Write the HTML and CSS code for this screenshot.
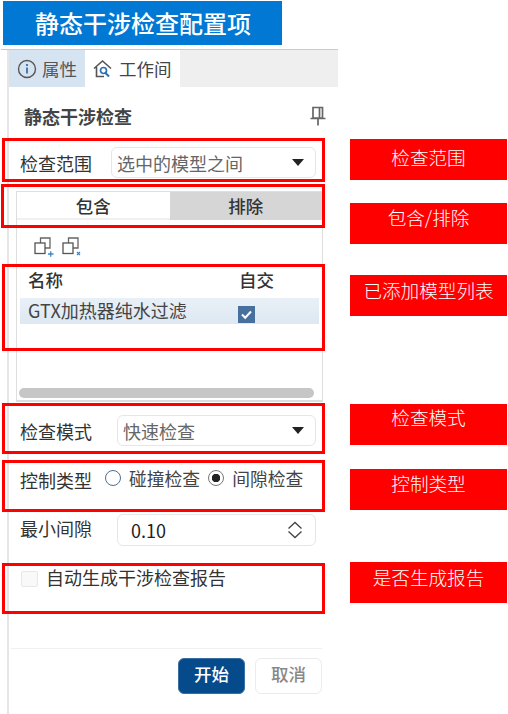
FILE: index.html
```html
<!DOCTYPE html>
<html lang="zh">
<head>
<meta charset="utf-8">
<title>静态干涉检查配置项</title>
<link rel="stylesheet" href="styles.css">
</head>
<body>
<div class="page">
  <h1 class="banner">静态干涉检查配置项</h1>
  <section class="panel">
    <div class="panel-body">
      <div class="tabs">
        <div class="tab tab-active">
          <svg class="tab-icon" viewBox="0 0 20 20" width="20" height="20"><circle cx="10" cy="10" r="8.500" fill="none" stroke="#555" stroke-width="1.400"/><path d="M10 8.500v6" stroke="#2a5f9a" stroke-width="1.600"/><circle cx="10" cy="6" r="1.100" fill="#2a5f9a"/></svg>
          <span>属性</span>
        </div>
        <div class="tab tab-plain">
          <svg class="tab-icon" viewBox="0 0 20 20" width="20" height="20"><path d="M1 9.500 9.500 2 18 9.500M3.500 8v9.500H11" fill="none" stroke="#555" stroke-width="1.600"/><circle cx="10.500" cy="11.500" r="3" fill="none" stroke="#2a6fb0" stroke-width="1.700"/><path d="m12.500 14 3.500 3.500" stroke="#2a6fb0" stroke-width="2"/></svg>
          <span>工作间</span>
        </div>
        <div class="tab-rest"></div>
      </div>

      <div class="title-row">
        <h2 class="title">静态干涉检查</h2>
        <svg class="pin" viewBox="0 0 18 20" width="18" height="20"><path d="M4 1.500h9.500V12H4zM10.500 1.500V12M1.500 12.500h15M9 12.500V19.500" fill="none" stroke="#666" stroke-width="1.700"/></svg>
      </div>

      <div class="row row-scope">
        <span class="label label-scope">检查范围</span>
        <div class="select select-scope"><span>选中的模型之间</span><i class="caret"></i></div>
      </div>

      <div class="group">
        <div class="seg">
          <div class="seg-item seg-on">包含</div>
          <div class="seg-item seg-off">排除</div>
        </div>
        <div class="tools">
          <svg viewBox="0 0 20 20" width="20" height="20"><path d="M6.500 6V1h9.500v10H11" fill="none" stroke="#666" stroke-width="1.300"/><rect x="1" y="6" width="10" height="10.500" fill="none" stroke="#555" stroke-width="1.300"/><path d="M14 17h5.500M16.700 14.300v5.500" stroke="#3f87c5" stroke-width="1.300"/></svg>
          <svg viewBox="0 0 20 20" width="20" height="20"><path d="M6.500 6V1h9.500v10H11" fill="none" stroke="#666" stroke-width="1.300"/><rect x="1" y="6" width="10" height="10.500" fill="none" stroke="#555" stroke-width="1.300"/><path d="m15 15 3 3m0-3-3 3" stroke="#3f87c5" stroke-width="1.200"/></svg>
        </div>
        <div class="thead">
          <span class="col-name">名称</span>
          <span class="col-self">自交</span>
        </div>
        <div class="trow">
          <span class="col-name">GTX加热器纯水过滤</span>
          <span class="tick"><svg viewBox="0 0 17 17" width="17" height="17"><path d="m4 8.500 3.200 3.200L13 5.500" fill="none" stroke="#fff" stroke-width="2"/></svg></span>
        </div>
        <div class="scrollbar"></div>
      </div>

      <div class="row row-mode">
        <span class="label label-mode">检查模式</span>
        <div class="select select-mode"><span>快速检查</span><i class="caret"></i></div>
      </div>

      <div class="row row-type">
        <span class="label label-type">控制类型</span>
        <span class="radio"></span><span class="radio-text">碰撞检查</span>
        <span class="radio radio-on"></span><span class="radio-text">间隙检查</span>
      </div>

      <div class="row row-gap">
        <span class="label label-mode label-up">最小间隙</span>
        <div class="select select-mode number"><span>0.10</span>
          <svg viewBox="0 0 16 18" width="16" height="18"><path d="m1.500 7.500 6.500-6 6.500 6M1.500 10.500l6.500 6 6.500-6" fill="none" stroke="#444" stroke-width="1.300"/></svg>
        </div>
      </div>

      <div class="row row-report">
        <span class="box"></span><span class="label label-up">自动生成干涉检查报告</span>
      </div>

      <div class="footer">
        <button class="btn btn-primary">开始</button>
        <button class="btn btn-ghost">取消</button>
      </div>
    </div>
  </section>

  <div class="mark mark-1"></div>
  <div class="mark mark-2"></div>
  <div class="mark mark-3"></div>
  <div class="mark mark-4"></div>
  <div class="mark mark-5"></div>
  <div class="mark mark-6"></div>

  <div class="note note-1">检查范围</div>
  <div class="note note-2">包含/排除</div>
  <div class="note note-3">已添加模型列表</div>
  <div class="note note-4">检查模式</div>
  <div class="note note-5">控制类型</div>
  <div class="note note-6">是否生成报告</div>
</div>
</body>
</html>
```

FILE: styles.css
```css
* { box-sizing: border-box; }
html, body { margin: 0; padding: 0; background: #fff; }
.page {
  position: relative;
  width: 508px;
  height: 714px;
  overflow: hidden;
  padding-top: 1px;
  font-family: "Noto Sans CJK SC", "Noto Sans", sans-serif;
  color: #333;
}
.banner {
  width: 279px;
  height: 44px;
  margin: 0 0 0 3px;
  background: #0078d4;
  color: #fff;
  font-size: 24px;
  font-weight: 500;
  line-height: 44px;
  padding-left: 32px;
}
.panel {
  width: 337px;
  margin: 4px 0 0 1px;
  border-top: 1px solid #c3ccd1;
}
.panel-body {
  margin-left: 6px;
  border-left: 2px solid #e6e6e6;
  height: 664px;
}
.tabs { display: flex; height: 37px; }
.tab {
  display: flex;
  align-items: center;
  font-size: 17.500px;
  color: #555;
}
.tab-active { width: 76px; background: #d6e4f2; padding-left: 8px; gap: 5px; }
.tab-plain { width: 95px; padding-left: 8px; gap: 6px; color: #444; }
.tab-rest { flex: 1; background: #efefef; }
.tab-icon { flex: none; }
.title-row {
  display: flex;
  align-items: center;
  justify-content: space-between;
  height: 34px;
  margin-top: 12px;
  padding: 0 11px 0 15px;
}
.title { margin: 0; font-size: 18px; line-height: 34px; font-weight: 700; color: #444; }
.row { display: flex; align-items: center; padding-left: 11px; }
.label { font-size: 18px; color: #333; line-height: 24px; white-space: nowrap; }
.label-up { padding-bottom: 4px; }
.label-scope { width: 91px; }
.label-mode { width: 97px; }
.label-type { width: 85px; }
.row-scope { height: 31px; margin-top: 14px; }
.select {
  display: flex;
  align-items: center;
  justify-content: space-between;
  height: 100%;
  border: 1px solid #e6e6e6;
  border-radius: 6px;
  font-size: 18px;
  color: #666;
  padding: 0 11px 0 5px;
}
.select-scope { width: 205px; }
.select-mode { width: 199px; }
.caret {
  width: 0;
  height: 0;
  border-left: 6px solid transparent;
  border-right: 6px solid transparent;
  border-top: 7px solid #222;
}
.group {
  width: 307px;
  height: 211px;
  margin: 13px 0 0 7px;
  border: 1px solid #dedede;
  border-width: 1px 1px 2px;
  display: flex;
  flex-direction: column;
}
.seg { display: flex; height: 28px; flex: none; }
.seg-item { flex: 1; text-align: center; font-size: 17.500px; line-height: 28px; font-weight: 500; }
.seg-on { background: #fff; border-bottom: 2px solid #f0f0f0; }
.seg-off { background: #d6d6d6; }
.tools { display: flex; gap: 8px; padding: 17px 0 0 17px; height: 65px; flex: none; }
.thead, .trow { display: flex; align-items: center; flex: none; }
.thead { height: 24px; font-size: 17.500px; font-weight: 500; color: #333; margin-top: -18px; }
.thead .col-name { padding-left: 11px; width: 222px; flex: none; }
.trow {
  height: 26px;
  margin: 7px 3px 0;
  background: linear-gradient(#e9f0f7, #dde8f2);
  color: #444;
  font-size: 18px;
  white-space: nowrap;
}
.trow .col-name { padding-left: 8px; width: 218px; flex: none; line-height: 24px; margin-top: -2px; }
.tick {
  width: 17px;
  height: 17px;
  background: #47709f;
  display: block;
  margin-top: 7px;
}
.tick svg { display: block; }
.scrollbar {
  width: 295px;
  height: 10px;
  margin: 64px 0 0 2px;
  background: #c6c6c6;
  border-radius: 5px;
  flex: none;
}
.row-mode { height: 31px; margin-top: 13px; }
.row-type { height: 30px; margin-top: 19px; }
.radio-text { font-size: 17.800px; color: #444; margin: 0 8px 4px; line-height: 24px; }
.radio {
  width: 16px;
  height: 16px;
  border: 1.500px solid #4a6f96;
  border-radius: 50%;
  flex: none;
  margin-bottom: 4px;
}
.radio-on { border-color: #777; background: radial-gradient(circle, #222 0 4px, #fff 4.500px); }
.row-gap { height: 32px; margin-top: 19px; }
.number { color: #222; padding: 0 12px 0 13px; }
.row-report { height: 16px; margin-top: 25px; padding-left: 12px; }
.box {
  width: 17px;
  height: 16px;
  border: 1px solid #e8e8e8;
  background: #f9f9f9;
  border-radius: 2px;
  margin-right: 8px;
  flex: none;
}
.footer {
  display: flex;
  justify-content: flex-end;
  gap: 10px;
  width: 311px;
  margin: 61px 0 0 2px;
  border-top: 1px solid #f0f0f0;
  padding-top: 9px;
}
.btn {
  width: 67px;
  height: 36px;
  border-radius: 6px;
  font: 500 17.500px/1 "Noto Sans CJK SC", "Noto Sans", sans-serif;
  padding: 0 0 4px;
}
.btn-primary { background: #054a8b; border: 1px solid #3a6fa3; color: #fff; }
.btn-ghost { background: #fff; border: 1px solid #ececec; color: #888; }

.mark { position: absolute; border: 3px solid #f00; }
.mark-1 { left: 2px; top: 138px; width: 323px; height: 44px; }
.mark-2 { left: 1px; top: 184px; width: 324px; height: 44px; }
.mark-3 { left: 2px; top: 264px; width: 323px; height: 87px; }
.mark-4 { left: 2px; top: 403px; width: 323px; height: 51px; }
.mark-5 { left: 2px; top: 460px; width: 323px; height: 52px; }
.mark-6 { left: 2px; top: 563px; width: 323px; height: 51px; }

.note {
  position: absolute;
  left: 350px;
  width: 157px;
  height: 41px;
  background: #f00;
  color: #fff;
  font-size: 18.600px;
  font-weight: 300;
  text-align: center;
  white-space: nowrap;
}
.note-1 { top: 139px; line-height: 36px; }
.note-2 { top: 203px; line-height: 28px; }
.note-3 { top: 275px; line-height: 30px; }
.note-4 { top: 404px; line-height: 26px; }
.note-5 { top: 469px; line-height: 28px; }
.note-6 { top: 562px; line-height: 30px; }
```
